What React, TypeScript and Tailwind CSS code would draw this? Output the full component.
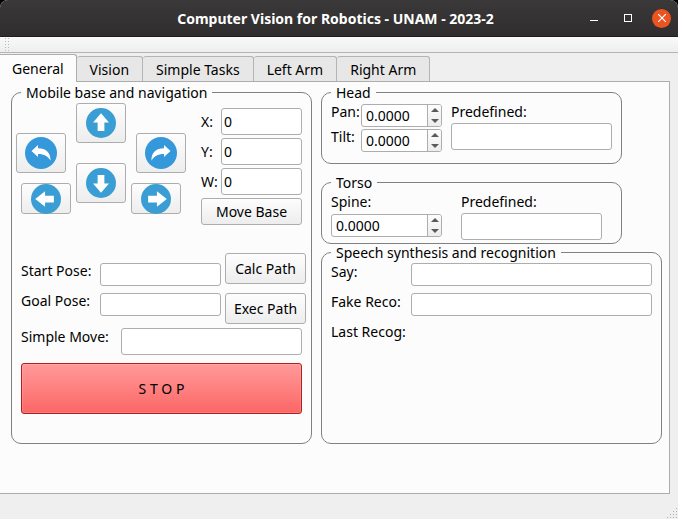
import { useState } from "react";
import type { ReactNode } from "react";

const raised =
  "rounded-[3px] border border-[#adadad] bg-linear-to-b from-[#fdfdfd] to-[#ededed] active:from-[#e4e4e4] active:to-[#dcdcdc]";
const field = "min-w-0 rounded-[3px] border border-[#adadad] bg-white px-[2px] outline-none focus:border-[#308cc6]";

function Group({ title, className = "", children }: { title: string; className?: string; children: ReactNode }) {
  return (
    <fieldset className={"min-w-0 rounded-[10px] border border-[#808080] px-1 " + className}>
      <legend className="ml-[5px] px-[5px] leading-[17px]">{title}</legend>
      {children}
    </fieldset>
  );
}

const arrowShapes = {
  up: "M16 5.500 24.500 15.500H19.600v9h-7.200v-9H7.500Z",
  down: "M16 26.500 24.500 16.500H19.600v-9h-7.200v9H7.500Z",
  left: "M4.500 16 15 7.800v4.600h9.400v7.200H15v4.600Z",
  right: "M27.500 16 17 7.800v4.600H7.600v7.200H17v4.600Z",
  turnLeft: "M6.500 14 13 8v3.300c8 0 12.800 4.200 12.500 12.500C23.500 19.500 19 17 13 17v3Z",
  turnRight: "M25.500 14 19 8v3.300c-8 0-12.800 4.200-12.500 12.500C8.500 19.500 13 17 19 17v3Z",
};

function ArrowButton({ shape, label, className = "h-10" }: { shape: keyof typeof arrowShapes; label: string; className?: string }) {
  const turn = shape === "turnLeft" || shape === "turnRight";
  return (
    <button type="button" aria-label={label} className={"flex w-[50px] items-center justify-center " + raised + " " + className}>
      <svg viewBox="0 0 32 32" className={turn ? "size-8" : "size-[30px]"}>
        <circle cx="16" cy="16" r="16" fill={turn ? "#3498db" : "#3a9ed4"} />
        <path d={arrowShapes[shape]} fill="#fff" />
      </svg>
    </button>
  );
}

function Spin({ id, className = "" }: { id: string; className?: string }) {
  const [value, setValue] = useState("0.0000");
  const step = (by: number) => setValue((Number(value) + by).toFixed(4));
  return (
    <div className={"flex h-[23px] overflow-hidden rounded-[3px] border border-[#adadad] bg-white " + className}>
      <input
        id={id}
        type="number"
        step="0.0001"
        value={value}
        onChange={(e) => setValue(e.target.value)}
        className="min-w-0 flex-1 pl-1 outline-none [appearance:textfield] [&::-webkit-inner-spin-button]:appearance-none"
      />
      <div className="flex w-[14px] flex-col border-l border-[#adadad] bg-linear-to-b from-[#fdfdfd] to-[#ededed]">
        <button type="button" aria-label="Increase" onClick={() => step(0.1)} className="flex flex-1 items-center justify-center">
          <svg viewBox="0 0 8 4" className="h-1 w-2"><path d="M0 4 4 0l4 4Z" fill="#5a5a5a" /></svg>
        </button>
        <button type="button" aria-label="Decrease" onClick={() => step(-0.1)} className="flex flex-1 items-center justify-center">
          <svg viewBox="0 0 8 4" className="h-1 w-2"><path d="M0 0h8L4 4Z" fill="#5a5a5a" /></svg>
        </button>
      </div>
    </div>
  );
}

function TitleBar() {
  return (
    <header className="flex h-[37px] items-center rounded-t-lg border-b border-[#1f1d1d] bg-linear-to-b from-[#3a3838] to-[#2f2d2d] text-white">
      <div className="flex-1" />
      <h1 className="text-[14px] font-bold">Computer Vision for Robotics - UNAM - 2023-2</h1>
      <div className="flex flex-1 items-center justify-end pr-[7px]">
        <button type="button" aria-label="Minimize" className="flex h-6 w-6 items-center justify-center">
          <svg viewBox="0 0 8 8" className="size-2"><path d="M0 6h8v1H0Z" fill="#fff" /></svg>
        </button>
        <button type="button" aria-label="Maximize" className="ml-[10px] flex h-6 w-6 items-center justify-center">
          <span className="size-2 border border-white" />
        </button>
        <button type="button" aria-label="Close" className="ml-3 flex size-[19px] items-center justify-center rounded-full bg-[#e95420]">
          <svg viewBox="0 0 8 8" className="size-2"><path d="m0 0 8 8M8 0 0 8" stroke="#fff" strokeWidth="1.2" /></svg>
        </button>
      </div>
    </header>
  );
}

const tabs = ["General", "Vision", "Simple Tasks", "Left Arm", "Right Arm"];

function Tabs() {
  return (
    <div role="tablist" className="flex h-7 items-end">
      {tabs.map((tab, i) => (
        <button
          key={tab}
          type="button"
          role="tab"
          aria-selected={i === 0}
          className={
            i === 0
              ? "z-10 -mb-px h-7 rounded-tr-[3px] border-t border-r border-[#adadad] bg-[#fcfcfc] px-3"
              : "h-[25px] rounded-t-[3px] border-t border-r border-[#b4b4b4] bg-[#e7e7e7] px-[13px]"
          }
        >
          {tab}
        </button>
      ))}
    </div>
  );
}

function Navigation() {
  return (
    <Group title="Mobile base and navigation">
      <div className="flex pt-[2px]">
        <div className="flex gap-[5px]">
          <div className="flex w-[55px] flex-col items-start gap-[10px] pt-[30px]">
            <ArrowButton shape="turnLeft" label="Turn left" />
            <ArrowButton shape="left" label="Move left" className="ml-[5px] h-[31px]" />
          </div>
          <div className="flex flex-col gap-5">
            <ArrowButton shape="up" label="Move forward" />
            <ArrowButton shape="down" label="Move backward" />
          </div>
          <div className="flex w-[55px] flex-col items-start gap-[10px] pt-[30px]">
            <ArrowButton shape="turnRight" label="Turn right" className="ml-[5px] h-10" />
            <ArrowButton shape="right" label="Move right" className="h-[31px]" />
          </div>
        </div>
        <div className="flex min-w-0 flex-1 flex-col gap-[3px] pt-[5px] pr-[5px] pl-[15px]">
          {["X", "Y", "W"].map((axis) => (
            <div key={axis} className="flex items-center">
              <label htmlFor={axis} className="w-5 shrink-0">{axis}:</label>
              <input id={axis} defaultValue="0" className={"h-[27px] flex-1 " + field} />
            </div>
          ))}
          <button type="button" className={"h-[27px] " + raised}>Move Base</button>
        </div>
      </div>
      <div className="mt-7 flex gap-1 pr-px pl-[5px]">
        <div className="flex min-w-0 flex-1 flex-col gap-[5px] pt-2">
          {["Start Pose", "Goal Pose"].map((name) => (
            <div key={name} className="flex">
              <label htmlFor={name} className="w-[79px] shrink-0 leading-5">{name}:</label>
              <input id={name} className={"mt-[2px] h-[23px] flex-1 " + field} />
            </div>
          ))}
        </div>
        <div className="flex w-[81px] shrink-0 flex-col gap-[9px]">
          <button type="button" className={"h-[31px] " + raised}>Calc Path</button>
          <button type="button" className={"h-[31px] " + raised}>Exec Path</button>
        </div>
      </div>
      <div className="mt-1 flex px-[5px]">
        <label htmlFor="simple" className="w-[100px] shrink-0 leading-[18px]">Simple Move:</label>
        <input id="simple" className={"h-[27px] flex-1 " + field} />
      </div>
      <div className="px-[5px] pt-2 pb-[29px]">
        <button
          type="button"
          className="h-[51px] w-full rounded-[3px] border border-[#b02020] bg-linear-to-b from-[#ff9999] to-[#fb6666] inset-shadow-[0_0_0_1px_#ffffff22]"
        >
          S T O P
        </button>
      </div>
    </Group>
  );
}

function Head() {
  return (
    <Group title="Head" className="max-w-[301px]">
      <div className="flex gap-[9px] px-[5px] pt-px pb-[13px]">
        <div className="flex shrink-0 flex-col gap-[2px]">
          {["Pan", "Tilt"].map((name) => (
            <div key={name} className="flex">
              <label htmlFor={name} className="w-[30px] leading-5">{name}:</label>
              <Spin id={name} className="mt-[2px] -mb-[2px] w-[81px]" />
            </div>
          ))}
        </div>
        <div className="flex min-w-0 flex-1 flex-col gap-px">
          <label htmlFor="head-pose" className="leading-5">Predefined:</label>
          <input id="head-pose" className={"h-[27px] " + field} />
        </div>
      </div>
    </Group>
  );
}

function Torso() {
  return (
    <Group title="Torso" className="mt-[10px] max-w-[301px]">
      <div className="flex gap-[19px] pt-px pr-[15px] pb-[3px] pl-[5px]">
        <div className="flex shrink-0 flex-col gap-[2px]">
          <label htmlFor="spine" className="leading-5">Spine:</label>
          <Spin id="spine" className="w-[111px]" />
        </div>
        <div className="flex min-w-0 flex-1 flex-col gap-px">
          <label htmlFor="torso-pose" className="leading-5">Predefined:</label>
          <input id="torso-pose" className={"h-[27px] " + field} />
        </div>
      </div>
    </Group>
  );
}

function Speech() {
  return (
    <Group title="Speech synthesis and recognition" className="flex-1">
      <div className="flex flex-col gap-[6px] px-[5px] pt-px">
        {["Say", "Fake Reco"].map((name) => (
          <div key={name} className="flex">
            <label htmlFor={name} className="w-20 shrink-0 leading-5">{name}:</label>
            <input id={name} className={"mt-px h-[23px] flex-1 " + field} />
          </div>
        ))}
        <p className="leading-5">Last Recog:</p>
      </div>
    </Group>
  );
}

export default function App() {
  return (
    <div className="bg-black">
      <div className="flex min-h-screen flex-col rounded-t-lg bg-[#efefef] font-['Noto_Sans',sans-serif] text-[14px] text-black">
        <TitleBar />
        <div className="h-4 border-b border-[#b4b4b4] bg-linear-to-b from-[#f9f9f9] to-[#eeeeee] pl-1">
          <div className="h-full w-[5px] bg-[radial-gradient(#b8b8b8_30%,transparent_40%)] bg-[size:3px_3px]" />
        </div>
        <Tabs />
        <main className="mr-2 flex-1 border-t border-r border-b border-[#adadad] bg-[#fcfcfc] pt-[2px] pr-[7px] pb-[49px] pl-[11px]">
          <div className="grid grid-cols-[301fr_341fr] gap-[9px]">
            <Navigation />
            <div className="flex min-w-0 flex-col">
              <Head />
              <Torso />
              <Speech />
            </div>
          </div>
        </main>
        <footer className="flex h-[25px] items-end justify-end">
          <svg viewBox="0 0 12 12" className="size-3" fill="#b0b0b0">
            <path d="M10 1h1v1h-1ZM7 4h1v1H7ZM10 4h1v1h-1ZM4 7h1v1H4ZM7 7h1v1H7ZM10 7h1v1h-1ZM1 10h1v1H1ZM4 10h1v1H4ZM7 10h1v1H7ZM10 10h1v1h-1Z" />
          </svg>
        </footer>
      </div>
    </div>
  );
}
